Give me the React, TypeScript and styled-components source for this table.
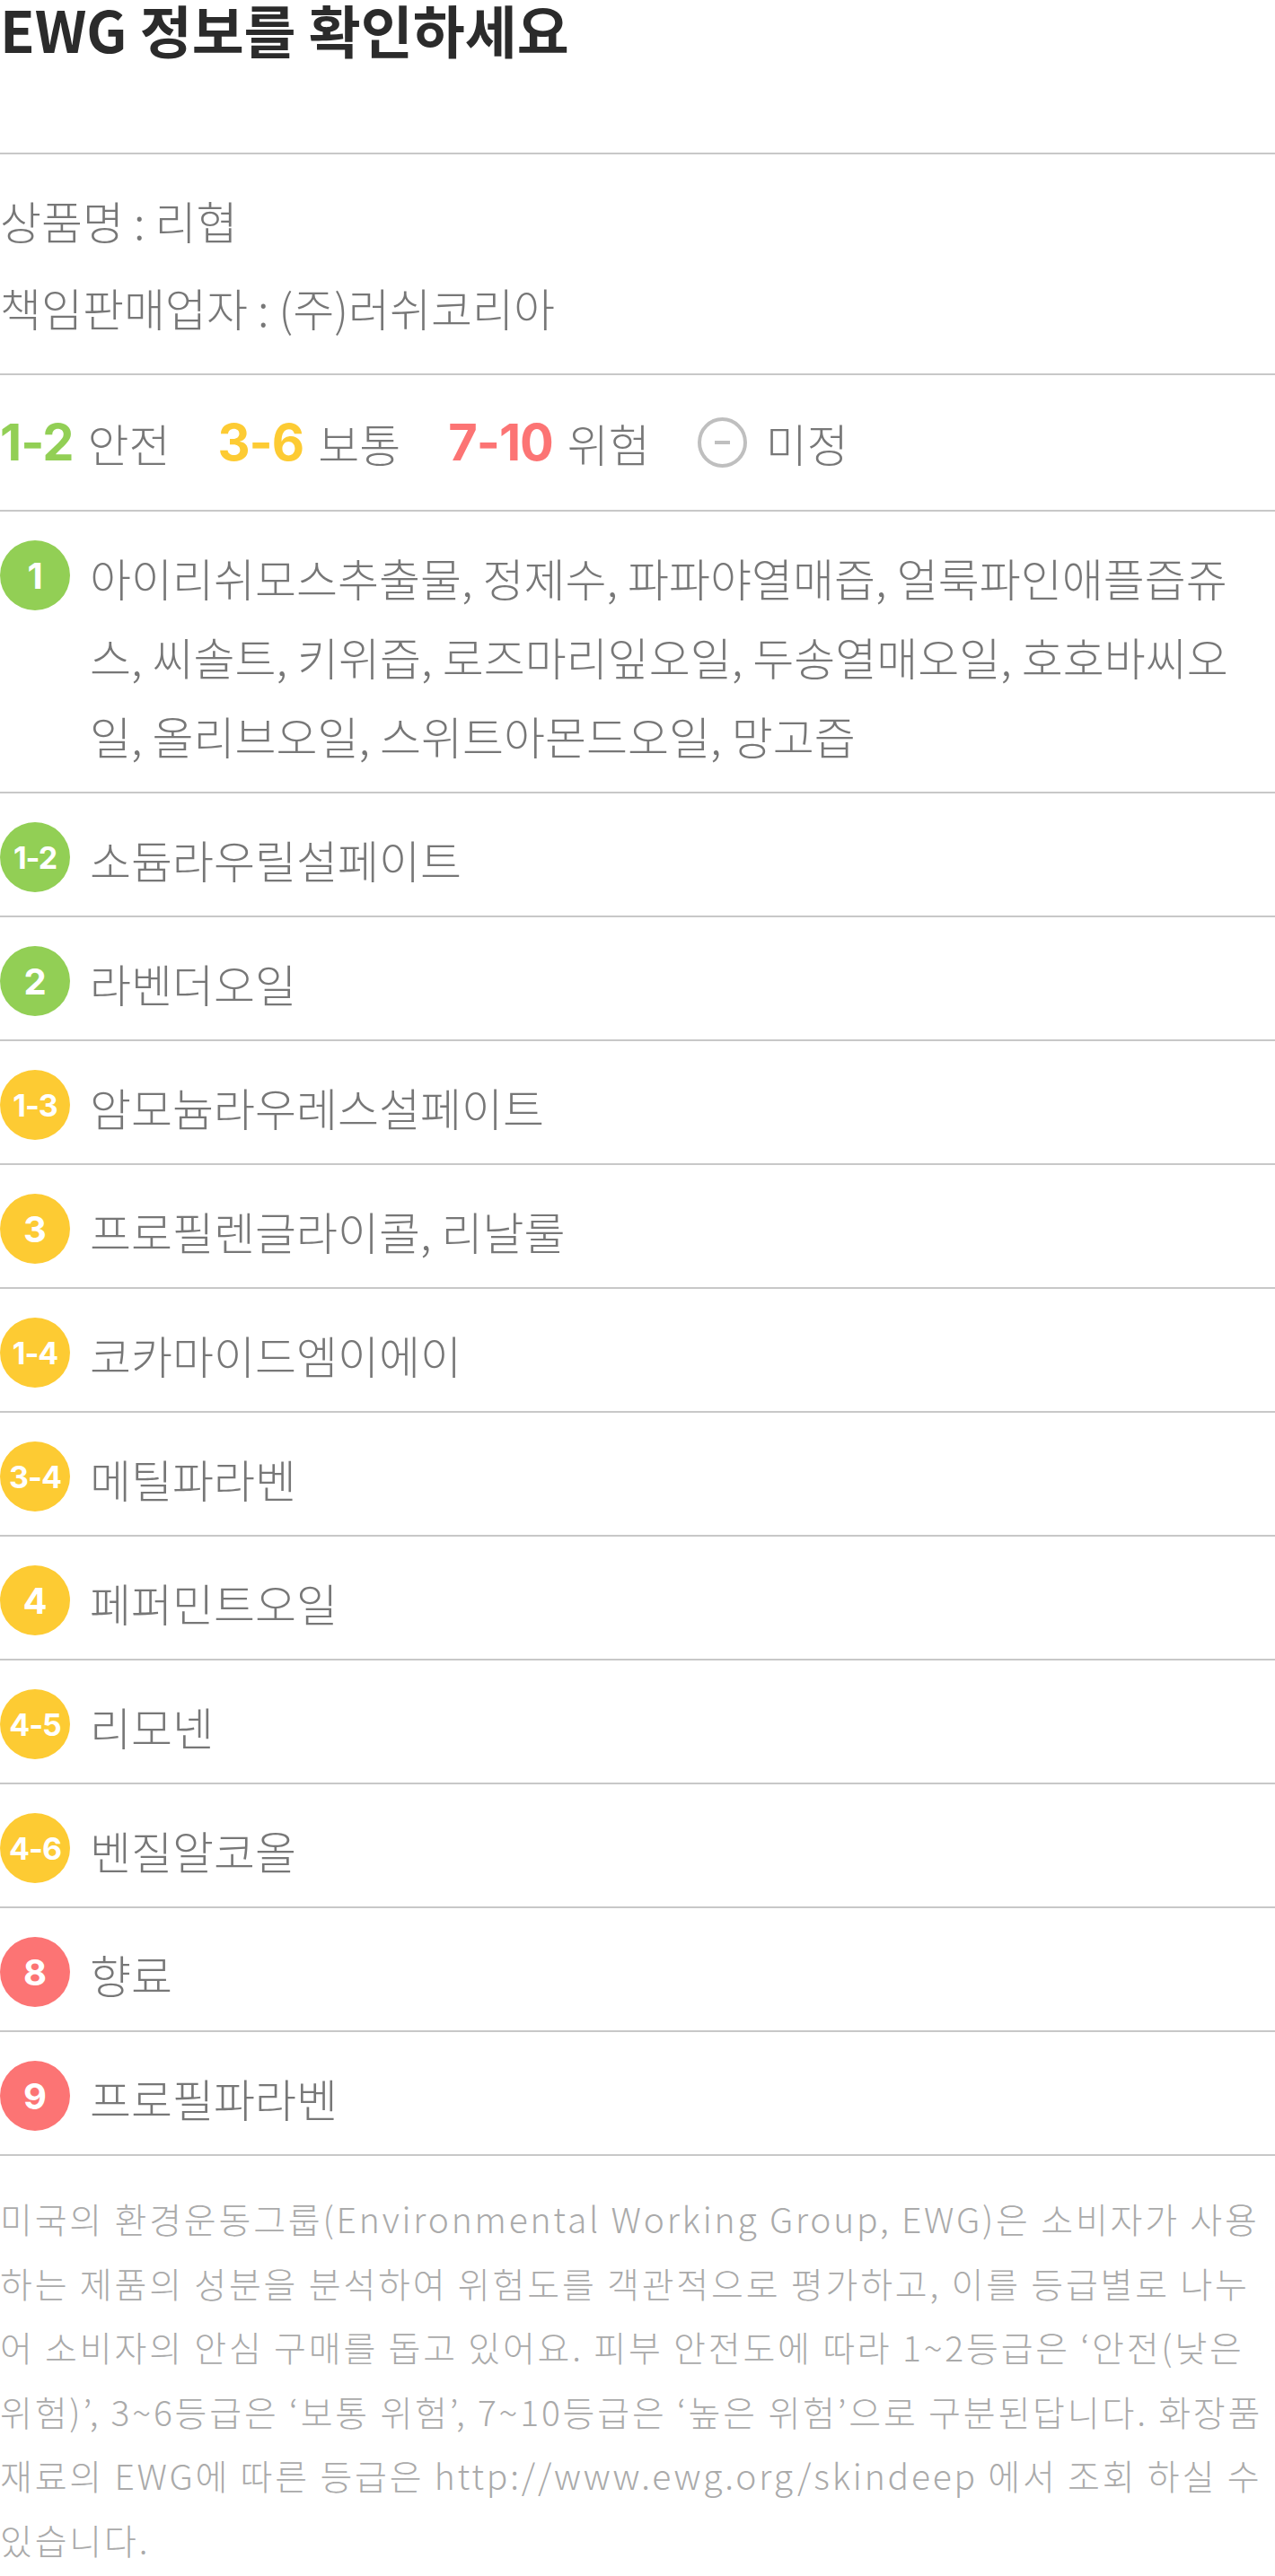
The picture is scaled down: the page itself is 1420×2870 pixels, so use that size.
import React from 'react';
import styled, {createGlobalStyle} from 'styled-components';

type Tone = 'safe' | 'normal' | 'danger';

const toneColors: Record<Tone, string> = {
  safe: '#92cf55',
  normal: '#fdcb33',
  danger: '#fc7474',
};

const GlobalStyle = createGlobalStyle`
  body {
    margin: 0;
    background: #fff;
    font-family: "Noto Sans CJK KR", "Noto Sans", sans-serif;
  }
`;

const Page = styled.div`
  width: 1420px;
`;

const TitleSection = styled.section`
  height: 170px;
  border-bottom: 2px solid #c8c8c8;
`;

const Title = styled.h1`
  margin: 0;
  font-size: 63px;
  line-height: 64px;
  font-weight: 700;
  color: #2b2b2b;
`;

const InfoSection = styled.section`
  padding: 25px 0;
  border-bottom: 2px solid #c8c8c8;
`;

const InfoLine = styled.p`
  margin: 0;
  font-size: 50px;
  line-height: 97px;
  font-weight: 300;
  color: #777;
`;

const Legend = styled.div`
  display: flex;
  align-items: center;
  gap: 53px;
  height: 88px;
  padding: 31px 0;
  border-bottom: 2px solid #c8c8c8;
`;

const LegendItem = styled.div<{$gap?: number}>`
  display: flex;
  align-items: center;
  gap: ${({$gap}) => $gap ?? 16}px;
`;

const LegendRange = styled.span<{$tone: Tone}>`
  font-family: Inter, "Noto Sans", sans-serif;
  font-weight: 700;
  font-size: 56px;
  letter-spacing: -1px;
  color: ${({$tone}) => toneColors[$tone]};
`;

const LegendLabel = styled.span`
  font-size: 50px;
  line-height: 88px;
  font-weight: 300;
  color: #777;
`;

const UnknownIcon = styled.svg`
  width: 55px;
  height: 56px;
  flex: none;
`;

const IngredientList = styled.ul`
  list-style: none;
  margin: 0;
  padding: 0;
`;

const IngredientRow = styled.li`
  display: flex;
  align-items: flex-start;
  gap: 22px;
  padding: 29px 20px 19px 0;
  border-bottom: 2px solid #c8c8c8;
`;

const Badge = styled.span<{$tone: Tone; $range: boolean}>`
  flex: none;
  width: 78px;
  height: 78px;
  margin-top: 3px;
  border-radius: 50%;
  display: flex;
  align-items: center;
  justify-content: center;
  background: ${({$tone}) => toneColors[$tone]};
  color: #fff;
  font-family: Inter, "Noto Sans", sans-serif;
  font-weight: 700;
  font-size: ${({$range}) => ($range ? '34px' : '40px')};
  letter-spacing: ${({$range}) => ($range ? '-1px' : '0')};
`;

const IngredientName = styled.span`
  font-size: 50px;
  line-height: 88px;
  font-weight: 300;
  color: #777;
`;

const Note = styled.p`
  margin: 0;
  padding: 34px 12px 4px 0;
  font-size: 39px;
  line-height: 71.6px;
  letter-spacing: 2.8px;
  font-weight: 300;
  color: #aaa;
`;

const ingredients: {grade: string; tone: Tone; name: string}[] = [
  {
    grade: '1',
    tone: 'safe',
    name:
      '아이리쉬모스추출물, 정제수, 파파야열매즙, 얼룩파인애플즙쥬스, 씨솔트, 키위즙, 로즈마리잎오일, 두송열매오일, 호호바씨오일, 올리브오일, 스위트아몬드오일, 망고즙',
  },
  {grade: '1-2', tone: 'safe', name: '소듐라우릴설페이트'},
  {grade: '2', tone: 'safe', name: '라벤더오일'},
  {grade: '1-3', tone: 'normal', name: '암모늄라우레스설페이트'},
  {grade: '3', tone: 'normal', name: '프로필렌글라이콜, 리날룰'},
  {grade: '1-4', tone: 'normal', name: '코카마이드엠이에이'},
  {grade: '3-4', tone: 'normal', name: '메틸파라벤'},
  {grade: '4', tone: 'normal', name: '페퍼민트오일'},
  {grade: '4-5', tone: 'normal', name: '리모넨'},
  {grade: '4-6', tone: 'normal', name: '벤질알코올'},
  {grade: '8', tone: 'danger', name: '향료'},
  {grade: '9', tone: 'danger', name: '프로필파라벤'},
];

export default function App() {
  return (
    <Page>
      <GlobalStyle />
      <TitleSection>
        <Title>EWG 정보를 확인하세요</Title>
      </TitleSection>

      <InfoSection>
        <InfoLine>상품명 : 리협</InfoLine>
        <InfoLine>책임판매업자 : (주)러쉬코리아</InfoLine>
      </InfoSection>

      <Legend>
        <LegendItem>
          <LegendRange $tone="safe">1-2</LegendRange>
          <LegendLabel>안전</LegendLabel>
        </LegendItem>
        <LegendItem>
          <LegendRange $tone="normal">3-6</LegendRange>
          <LegendLabel>보통</LegendLabel>
        </LegendItem>
        <LegendItem>
          <LegendRange $tone="danger">7-10</LegendRange>
          <LegendLabel>위험</LegendLabel>
        </LegendItem>
        <LegendItem $gap={21}>
          <UnknownIcon viewBox="0 0 55 56">
            <ellipse cx="27.5" cy="28" rx="25.5" ry="26" fill="none" stroke="#bfbfbf" strokeWidth="4" />
            <line x1="19" y1="28" x2="36" y2="28" stroke="#bfbfbf" strokeWidth="4" />
          </UnknownIcon>
          <LegendLabel>미정</LegendLabel>
        </LegendItem>
      </Legend>

      <IngredientList>
        {ingredients.map((item) => (
          <IngredientRow key={item.grade}>
            <Badge $tone={item.tone} $range={item.grade.includes('-')}>
              {item.grade}
            </Badge>
            <IngredientName>{item.name}</IngredientName>
          </IngredientRow>
        ))}
      </IngredientList>

      <Note>
        미국의 환경운동그룹(Environmental Working Group, EWG)은 소비자가 사용하는 제품의 성분을
        분석하여 위험도를 객관적으로 평가하고, 이를 등급별로 나누어 소비자의 안심 구매를 돕고
        있어요. 피부 안전도에 따라 1~2등급은 ‘안전(낮은 위험)’, 3~6등급은 ‘보통 위험’, 7~10등급은
        ‘높은 위험’으로 구분된답니다. 화장품 재료의 EWG에 따른 등급은 http://www.ewg.org/skindeep 에서
        조회 하실 수 있습니다.
      </Note>
    </Page>
  );
}
